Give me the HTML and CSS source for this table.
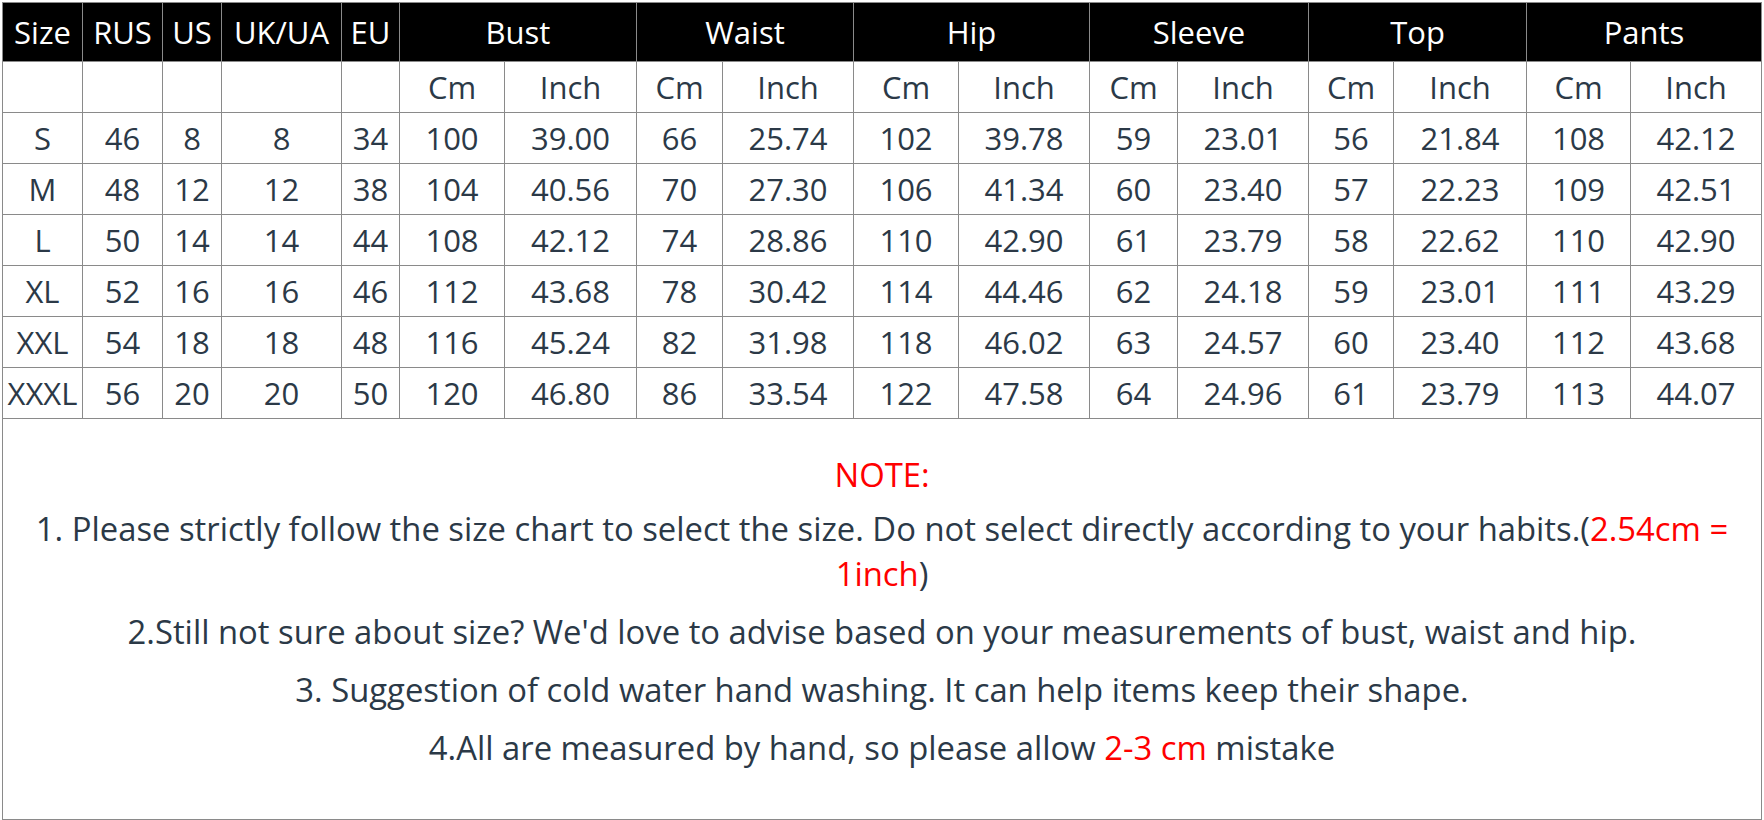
FILE: index.html
```html
<!DOCTYPE html>
<html>
<head>
<meta charset="utf-8">
<link rel="stylesheet" href="styles.css">
</head>
<body>
<div class="wrap">
<table class="chart">
<colgroup>
<col style="width:80px"><col style="width:80px"><col style="width:59px"><col style="width:120px"><col style="width:58px">
<col style="width:105px"><col style="width:132px"><col style="width:86px"><col style="width:131px">
<col style="width:105px"><col style="width:131px"><col style="width:88px"><col style="width:131px">
<col style="width:85px"><col style="width:133px"><col style="width:104px"><col style="width:131px">
</colgroup>
<thead>
<tr class="head">
<th>Size</th><th>RUS</th><th>US</th><th>UK/UA</th><th>EU</th>
<th colspan="2">Bust</th><th colspan="2">Waist</th><th colspan="2">Hip</th><th colspan="2">Sleeve</th><th colspan="2">Top</th><th colspan="2">Pants</th>
</tr>
<tr class="sub">
<td></td><td></td><td></td><td></td><td></td>
<td>Cm</td><td>Inch</td><td>Cm</td><td>Inch</td><td>Cm</td><td>Inch</td><td>Cm</td><td>Inch</td><td>Cm</td><td>Inch</td><td>Cm</td><td>Inch</td>
</tr>
</thead>
<tbody>
<tr><td>S</td><td>46</td><td>8</td><td>8</td><td>34</td><td>100</td><td>39.00</td><td>66</td><td>25.74</td><td>102</td><td>39.78</td><td>59</td><td>23.01</td><td>56</td><td>21.84</td><td>108</td><td>42.12</td></tr>
<tr><td>M</td><td>48</td><td>12</td><td>12</td><td>38</td><td>104</td><td>40.56</td><td>70</td><td>27.30</td><td>106</td><td>41.34</td><td>60</td><td>23.40</td><td>57</td><td>22.23</td><td>109</td><td>42.51</td></tr>
<tr><td>L</td><td>50</td><td>14</td><td>14</td><td>44</td><td>108</td><td>42.12</td><td>74</td><td>28.86</td><td>110</td><td>42.90</td><td>61</td><td>23.79</td><td>58</td><td>22.62</td><td>110</td><td>42.90</td></tr>
<tr><td>XL</td><td>52</td><td>16</td><td>16</td><td>46</td><td>112</td><td>43.68</td><td>78</td><td>30.42</td><td>114</td><td>44.46</td><td>62</td><td>24.18</td><td>59</td><td>23.01</td><td>111</td><td>43.29</td></tr>
<tr><td>XXL</td><td>54</td><td>18</td><td>18</td><td>48</td><td>116</td><td>45.24</td><td>82</td><td>31.98</td><td>118</td><td>46.02</td><td>63</td><td>24.57</td><td>60</td><td>23.40</td><td>112</td><td>43.68</td></tr>
<tr><td>XXXL</td><td>56</td><td>20</td><td>20</td><td>50</td><td>120</td><td>46.80</td><td>86</td><td>33.54</td><td>122</td><td>47.58</td><td>64</td><td>24.96</td><td>61</td><td>23.79</td><td>113</td><td>44.07</td></tr>
<tr class="notes-row">
<td colspan="17" class="notes">
<p class="red note-title">NOTE:</p>
<p>1. Please strictly follow the size chart to select the size. Do not select directly according to your habits.(<span class="red">2.54cm = 1inch</span>)</p>
<p>2.Still not sure about size? We'd love to advise based on your measurements of bust, waist and hip.</p>
<p>3. Suggestion of cold water hand washing. It can help items keep their shape.</p>
<p>4.All are measured by hand, so please allow <span class="red">2-3 cm</span> mistake</p>
</td>
</tr>
</tbody>
</table>
</div>
</body>
</html>
```
FILE: styles.css
```css
html, body {
  margin: 0;
  padding: 0;
  background: #fff;
}
.wrap {
  padding: 2px 0 0 2px;
}
.chart {
  border-collapse: collapse;
  table-layout: fixed;
  width: 1760px;
  font-family: "Open Sans", "Noto Sans", sans-serif;
  color: #2b3947;
}
.chart th, .chart td {
  border: 1px solid #8a8a8a;
  padding: 0;
  text-align: center;
  font-size: 31px;
  font-weight: 400;
  height: 50px;
  line-height: 30px;
  white-space: nowrap;
  overflow: hidden;
}
.chart .head th {
  background: #000;
  color: #fff;
  height: 58px;
}
.chart .notes {
  height: 367px;
  white-space: normal;
  vertical-align: top;
  font-size: 32.8px;
  line-height: 45px;
  padding: 33px 8px 0;
}
.notes p {
  margin: 0 0 13px;
}
.notes .note-title {
  margin-bottom: 9px;
}
.red {
  color: #f00;
}
```
